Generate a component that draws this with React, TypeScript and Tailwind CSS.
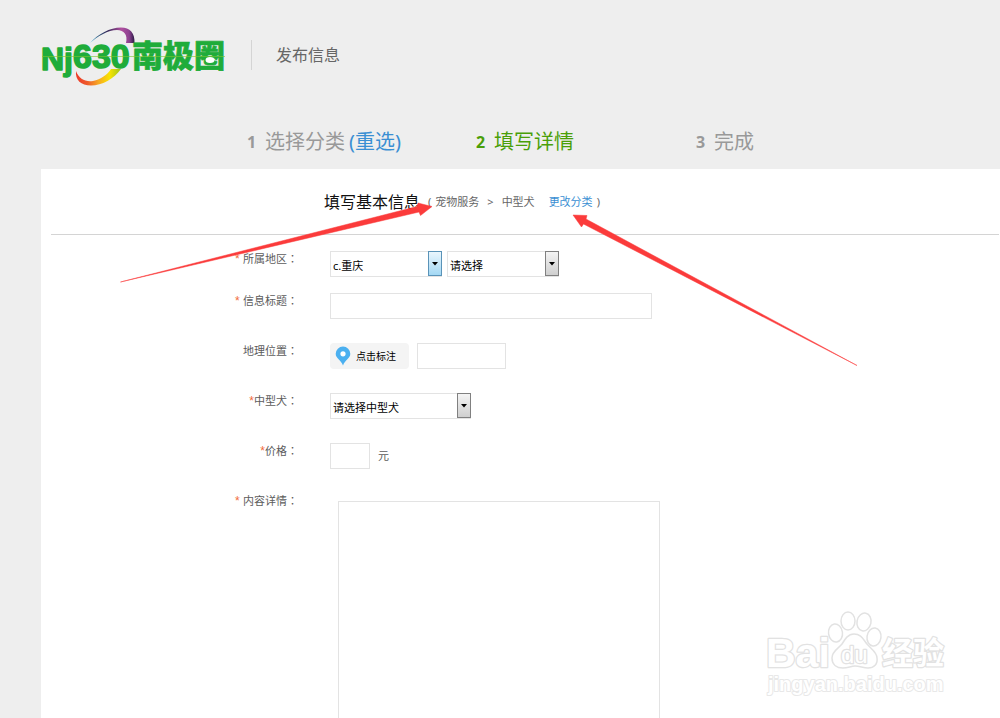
import type { ReactNode } from "react";

function Logo() {
  return (
    <svg width="190" height="66" viewBox="0 0 190 66" role="img" aria-label="Nj630南极圈">
      <defs>
        <linearGradient id="topArc" x1="0" x2="1" y1="0" y2="0">
          <stop offset="0" stopColor="#5cc8f0" />
          <stop offset="0.2" stopColor="#2d5277" />
          <stop offset="0.42" stopColor="#3d2a5c" />
          <stop offset="0.7" stopColor="#b0509f" />
          <stop offset="0.88" stopColor="#8d4191" />
          <stop offset="1" stopColor="#2b1a45" />
        </linearGradient>
        <linearGradient id="bottomArc" x1="0" x2="1" y1="0" y2="0">
          <stop offset="0" stopColor="#ec3a2c" />
          <stop offset="0.25" stopColor="#ee5a2b" />
          <stop offset="0.5" stopColor="#f7a823" />
          <stop offset="0.75" stopColor="#f8e400" />
          <stop offset="1" stopColor="#9cc51d" />
        </linearGradient>
      </defs>
      <path d="M49 21C57 12 69 5.500 80 5.500C89 5.500 94 11 93.500 21L85 21C87 13 83 8 76 8C67 8 57 14 49 21Z" fill="url(#topArc)" />
      <path d="M35 49C38 57 44 60 52 59C60 57 66 53 70 47L80 47C73 57 61 63.500 50 63.500C40 63.500 34 58 35 49Z" fill="url(#bottomArc)" />
      <g fill="#1fac3a" stroke="#1fac3a" strokeLinejoin="round">
        <g fontWeight="700" fontFamily="Liberation Sans, sans-serif">
          <text x="0" y="48" fontSize="32" strokeWidth="1.500">Nj</text>
          <text x="32" y="46" fontSize="34" strokeWidth="1.500">630</text>
        </g>
        <text x="91" y="45" fontSize="31" fontWeight="900" fontFamily="Noto Sans CJK SC, sans-serif" strokeWidth="0.700">南极圈</text>
      </g>
      <ellipse cx="169" cy="38" rx="4.500" ry="3" fill="#fff" />
      <path d="M1 34.500H184" stroke="#7dc832" strokeWidth="1" opacity="0.6" />
    </svg>
  );
}

function Step({ n, className, children }: { n: number; className: string; children: ReactNode }) {
  return (
    <li className={`flex items-center text-xl leading-6 whitespace-nowrap ${className}`}>
      <span className="w-[18px] text-base leading-6 font-bold">{n}</span>
      {children}
    </li>
  );
}

type FieldProps = { id: string; label: string; required?: "near" | "spaced"; className?: string; children: ReactNode };

function Field({ id, label, required, className = "", children }: FieldProps) {
  return (
    <div className={`flex items-start gap-8 ${className}`}>
      <label htmlFor={id} className="w-[257px] shrink-0 text-right text-[11px] leading-[14px] text-[#5c5c5c]">
        {required && (
          <span className="font-['Liberation_Sans',sans-serif] text-xs leading-[14px] text-[#f26b3a]">
            *{required === "spaced" ? " " : ""}
          </span>
        )}
        {label}
        <span className="font-['Noto_Sans_CJK_TC',sans-serif]">：</span>
      </label>
      {children}
    </div>
  );
}

type PickerProps = { id: string; label: string; options: string[]; width: string; active?: boolean };

function Picker({ id, label, options, width, active }: PickerProps) {
  const arrow = active
    ? "border-[#5a93b8] from-[#eaf6fd] to-[#a3d8f4]"
    : "border-[#808080] from-[#f4f4f4] to-[#cfcfcf]";
  return (
    <div className={`relative h-[26px] ${width}`}>
      <select
        id={id}
        aria-label={label}
        className="h-full w-full appearance-none rounded-none border border-[#e3e3e3] bg-white pt-1 pr-4 pl-[2px] text-[11px] leading-5 text-black"
      >
        {options.map((o) => (
          <option key={o}>{o}</option>
        ))}
      </select>
      <span
        className={`pointer-events-none absolute top-0 right-0 flex h-[25px] w-[14px] items-center justify-center border bg-linear-to-b ${arrow}`}
      >
        <svg width="6" height="4" viewBox="0 0 6 4" aria-hidden="true">
          <path d="M0 0H6L3 3.500Z" fill="#000" />
        </svg>
      </span>
    </div>
  );
}

const box = "h-[26px] border border-[#e3e3e3] bg-white px-1 text-[11px]";

function Arrows() {
  return (
    <svg className="pointer-events-none absolute top-0 left-0" width="870" height="380" viewBox="0 0 870 380" aria-hidden="true">
      <g fill="#fb3b3b" stroke="#fb3b3b" strokeWidth="0.500">
        <path d="M120.500 282L417 206.500L418 203L432 206.500L420.500 215.500L419 212Z" />
        <path d="M857 365.500L586 219L587 215.500L573 215L581.500 227L583.500 224Z" />
      </g>
    </svg>
  );
}

function Watermark() {
  return (
    <svg
      className="pointer-events-none absolute right-[46px] bottom-[18px]"
      width="194"
      height="96"
      viewBox="760 604 194 96"
      aria-hidden="true"
    >
      <g fill="#fff" stroke="#e2e2e2" strokeWidth="1.500" strokeLinejoin="round">
        <ellipse cx="835.500" cy="633" rx="7" ry="9" transform="rotate(-8 835.500 633)" />
        <ellipse cx="848" cy="621" rx="7" ry="9" />
        <ellipse cx="864" cy="622" rx="7" ry="9" transform="rotate(12 864 622)" />
        <ellipse cx="874" cy="637" rx="7" ry="9" transform="rotate(8 874 637)" />
        <path d="M854 634C848 634 845 639 842 644C838 649 832 651 832 658C832 665 837 668 843 668C848 668 851 666 855 666C860 666 863 668 868 668C874 668 878 664 877 658C877 652 871 649 867 644C863 639 861 634 854 634Z" />
        <g fontFamily="Liberation Sans, sans-serif">
          <text x="766" y="667" fontSize="41" fontWeight="700" strokeWidth="2.500" paintOrder="stroke">Bai</text>
          <text x="841" y="663" fontSize="24" strokeWidth="2.500" paintOrder="stroke">du</text>
          <text x="768" y="691" fontSize="20" fontWeight="700" strokeWidth="2" stroke="#e8e8e8" paintOrder="stroke">jingyan.baidu.com</text>
        </g>
        <text x="882" y="664" fontSize="31" fontWeight="700" strokeWidth="2.500" paintOrder="stroke" fontFamily="Noto Sans CJK SC, sans-serif">经验</text>
      </g>
    </svg>
  );
}

export default function App() {
  return (
    <div className="relative flex min-h-screen flex-col bg-[#eee] pl-[41px] font-['Noto_Sans','Noto_Sans_CJK_SC',sans-serif]">
      <header className="flex h-[110px] items-center">
        <a href="#home" className="shrink-0">
          <Logo />
        </a>
        <h1 className="ml-5 flex h-[30px] items-center border-l border-[#d4d4d4] pl-6 text-base leading-6 text-[#666]">发布信息</h1>
      </header>

      <ol className="flex h-[59px] items-start pt-5 pl-[206px] text-[#999]">
        <Step n={1} className="w-[229px]">
          选择分类
          <a href="#category" className="ml-1 text-[#3a8fd3]">(重选)</a>
        </Step>
        <Step n={2} className="w-[220px] text-[#4a9f08]">填写详情</Step>
        <Step n={3} className="">完成</Step>
      </ol>

      <main className="flex flex-1 flex-col bg-white">
        <div className="mr-px ml-[10px] flex h-[66px] items-center border-b border-[#d4d4d4] pl-[273px]">
          <h2 className="text-base leading-6 text-[#111]">填写基本信息</h2>
          <p className="ml-2 flex items-center text-[11px] leading-4 whitespace-nowrap text-[#666]">
            <span className="mr-1">(</span>
            宠物服务
            <span className="mx-2">&gt;</span>
            中型犬
            <a href="#category" className="mr-1 ml-[14px] text-[#3a8fd3]">更改分类</a>
            <span>)</span>
          </p>
        </div>

        <form className="flex flex-1 flex-col gap-6 pt-4">
          <div className="flex flex-col gap-4">
            <Field id="region" label="所属地区" required="spaced">
              <div className="flex gap-[5px]">
                <Picker id="region" label="所属地区" options={["c.重庆"]} width="w-[112px]" active />
                <Picker id="district" label="区县" options={["请选择"]} width="w-[112px]" />
              </div>
            </Field>
            <Field id="title" label="信息标题" required="spaced">
              <input id="title" type="text" className={`${box} w-[322px]`} />
            </Field>
          </div>
          <Field id="location" label="地理位置">
            <div className="flex gap-2">
              <button type="button" className="flex h-[26px] w-[79px] items-center gap-[5px] rounded-sm bg-[#f4f4f4] pl-[5px] text-[10px] text-black">
                <svg width="16" height="20" viewBox="0 0 16 20" aria-hidden="true">
                  <path d="M8 0.500A7.300 7.300 0 0 0 0.700 7.800C0.700 12.500 6 14 8 19.500C10 14 15.300 12.500 15.300 7.800A7.300 7.300 0 0 0 8 0.500Z" fill="#4bb0f0" />
                  <circle cx="8" cy="7.800" r="2.600" fill="#fff" />
                </svg>
                点击标注
              </button>
              <input id="location" type="text" className={`${box} w-[89px]`} />
            </div>
          </Field>
          <Field id="breed" label="中型犬" required="near">
            <Picker id="breed" label="中型犬" options={["请选择中型犬"]} width="w-[141px]" />
          </Field>
          <Field id="price" label="价格" required="near">
            <div className="flex items-center gap-2 text-[11px] text-[#5c5c5c]">
              <input id="price" type="text" className={`${box} w-10`} />
              元
            </div>
          </Field>
          <Field id="detail" label="内容详情" required="spaced" className="min-h-[225px] flex-1">
            <textarea id="detail" className="mt-2 ml-2 block w-[322px] resize-none self-stretch border border-b-0 border-[#e3e3e3] p-1 text-[11px]" />
          </Field>
        </form>
      </main>

      <Arrows />
      <Watermark />
    </div>
  );
}
